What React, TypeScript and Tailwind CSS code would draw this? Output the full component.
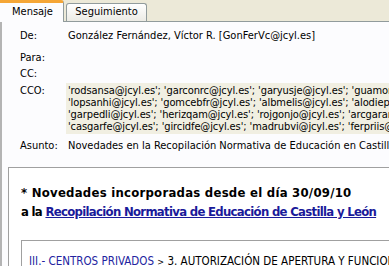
import React from "react";

const cco = [
  "'rodsansa@jcyl.es'; 'garconrc@jcyl.es'; 'garyusje@jcyl.es'; 'guamonma@jcyl.es'; 'sanperju@jcyl.es'",
  "'lopsanhi@jcyl.es'; 'gomcebfr@jcyl.es'; 'albmelis@jcyl.es'; 'alodiepi@jcyl.es'; 'marherjo@jcyl.es'",
  "'garpedli@jcyl.es'; 'herizqam@jcyl.es'; 'rojgonjo@jcyl.es'; 'arcgaran@jcyl.es'; 'fersanma@jcyl.es'",
  "'casgarfe@jcyl.es'; 'gircidfe@jcyl.es'; 'madrubvi@jcyl.es'; 'ferpriis@jcyl.es'; 'lopgarlu@jcyl.es'",
];

const font = { fontFamily: '"DejaVu Sans Condensed", "DejaVu Sans", sans-serif' };

export default function App() {
  return (
    <div
      className="w-full h-[266px] overflow-hidden bg-white text-black"
      style={font}
    >
      {/* Tabs */}
      <div className="flex items-end h-[22px] bg-[#ece9d8] border-b border-[#919b9c]">
        <div className="w-[64px] h-[22px] -mb-px bg-[#fcfcfe] border-t-[3px] border-t-[#f5a636] border-r border-r-[#919b9c] rounded-tr-[3px] flex items-center pl-[12px] text-[11px]">
          Mensaje
        </div>
        <div className="ml-[2px] w-[81px] h-[18px] border border-b-0 border-[#919b9c] rounded-t-[3px] bg-gradient-to-b from-white to-[#ecebe5] flex items-center justify-center text-[11px]">
          Seguimiento
        </div>
      </div>

      <div className="border-l-2 border-[#b4b4b4] bg-[#fcfcfe] h-full">
        {/* Header fields */}
        <div className="pl-[18px] text-[11px] leading-[14px] whitespace-nowrap">
          <div className="flex pt-[7px]">
            <span className="w-[48px] shrink-0">De:</span>
            <span>González Fernández, Víctor R. [GonFerVc@jcyl.es]</span>
          </div>
          <div className="flex mt-[8px]">
            <span className="w-[48px] shrink-0">Para:</span>
          </div>
          <div className="flex mt-[2px]">
            <span className="w-[48px] shrink-0">CC:</span>
          </div>
          <div className="flex mt-[2px]">
            <span className="w-[46px] shrink-0 pt-[2px] leading-[12px]">CCO:</span>
            <div className="flex-1 overflow-hidden bg-[#f1efe2] pt-[2px] pb-[1px] pl-[2px] leading-[12px] tracking-[-0.1px]">
              {cco.map((l) => (
                <div key={l}>{l}</div>
              ))}
            </div>
          </div>
          <div className="flex mt-[5px]">
            <span className="w-[48px] shrink-0">Asunto:</span>
            <span>Novedades en la Recopilación Normativa de Educación en Castilla y León</span>
          </div>
        </div>

        {/* Body */}
        <div className="ml-[6px] mt-[14px] border-t border-l border-[#a0a0a0] bg-white pl-[12px] pt-[15px] whitespace-nowrap">
          <div className="text-[13px] font-bold leading-[19px] tracking-[0.25px]">
            * Novedades incorporadas desde el día 30/09/10
          </div>
          <div className="text-[13px] font-bold leading-[19px] tracking-[-0.7px]">
            a la{" "}
            <a className="text-[#1a1a9a] underline" href="#">
              Recopilación Normativa de Educación de Castilla y León
            </a>
          </div>
          <div className="mt-[19px] border-t border-l border-[#a0a0a0] pl-[7px] pt-[12px] text-[11.5px]">
            <a className="text-[#2323a0] underline" href="#">
              III.- CENTROS PRIVADOS
            </a>{" "}
            <span className="text-[9px]">&gt;</span> 3. AUTORIZACIÓN DE APERTURA Y FUNCIONAMIENTO
          </div>
        </div>
      </div>
    </div>
  );
}
